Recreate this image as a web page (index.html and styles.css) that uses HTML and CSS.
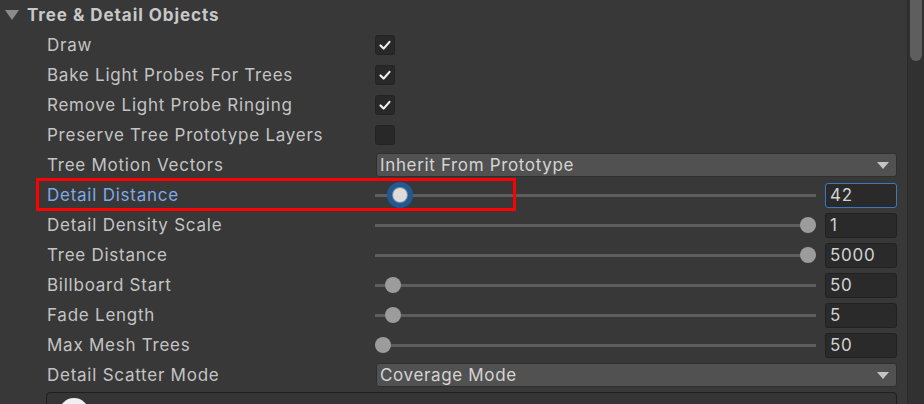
FILE: index.html
```html
<!DOCTYPE html>
<html>
<head>
<meta charset="utf-8">
<link rel="stylesheet" href="styles.css">
</head>
<body>
<div class="page">
  <div class="content">
    <div class="header">
      <span class="fold"></span>
      <span class="title">Tree &amp; Detail Objects</span>
    </div>

    <div class="row">
      <span class="label">Draw</span>
      <div class="ctrl"><span class="check"><svg viewBox="0 0 20 20" width="20" height="20"><polyline points="5,10.5 8.5,14 15,6.5" fill="none" stroke="#f0f0f0" stroke-width="2.4" stroke-linecap="round" stroke-linejoin="round"/></svg></span></div>
    </div>
    <div class="row">
      <span class="label">Bake Light Probes For Trees</span>
      <div class="ctrl"><span class="check"><svg viewBox="0 0 20 20" width="20" height="20"><polyline points="5,10.5 8.5,14 15,6.5" fill="none" stroke="#f0f0f0" stroke-width="2.4" stroke-linecap="round" stroke-linejoin="round"/></svg></span></div>
    </div>
    <div class="row">
      <span class="label">Remove Light Probe Ringing</span>
      <div class="ctrl"><span class="check"><svg viewBox="0 0 20 20" width="20" height="20"><polyline points="5,10.5 8.5,14 15,6.5" fill="none" stroke="#f0f0f0" stroke-width="2.4" stroke-linecap="round" stroke-linejoin="round"/></svg></span></div>
    </div>
    <div class="row">
      <span class="label">Preserve Tree Prototype Layers</span>
      <div class="ctrl"><span class="check"></span></div>
    </div>
    <div class="row">
      <span class="label">Tree Motion Vectors</span>
      <div class="ctrl"><div class="dropdown"><span>Inherit From Prototype</span><span class="arrow"></span></div></div>
    </div>
    <div class="row">
      <span class="label focus-label">Detail Distance</span>
      <div class="ctrl slider-ctrl">
        <div class="slider"><span class="track"></span><span class="thumb active" style="left:25px"></span></div>
        <span class="field focused">42</span>
      </div>
      <span class="annot"></span>
    </div>
    <div class="row">
      <span class="label">Detail Density Scale</span>
      <div class="ctrl slider-ctrl">
        <div class="slider"><span class="track"></span><span class="thumb" style="left:433px"></span></div>
        <span class="field">1</span>
      </div>
    </div>
    <div class="row">
      <span class="label">Tree Distance</span>
      <div class="ctrl slider-ctrl">
        <div class="slider"><span class="track"></span><span class="thumb" style="left:433px"></span></div>
        <span class="field">5000</span>
      </div>
    </div>
    <div class="row">
      <span class="label">Billboard Start</span>
      <div class="ctrl slider-ctrl">
        <div class="slider"><span class="track"></span><span class="thumb" style="left:18px"></span></div>
        <span class="field">50</span>
      </div>
    </div>
    <div class="row">
      <span class="label">Fade Length</span>
      <div class="ctrl slider-ctrl">
        <div class="slider"><span class="track"></span><span class="thumb" style="left:18px"></span></div>
        <span class="field">5</span>
      </div>
    </div>
    <div class="row">
      <span class="label">Max Mesh Trees</span>
      <div class="ctrl slider-ctrl">
        <div class="slider"><span class="track"></span><span class="thumb" style="left:8px"></span></div>
        <span class="field">50</span>
      </div>
    </div>
    <div class="row">
      <span class="label">Detail Scatter Mode</span>
      <div class="ctrl"><div class="dropdown"><span>Coverage Mode</span><span class="arrow"></span></div></div>
    </div>
    <div class="box">
      <span class="circle"></span>
    </div>
  </div>
  <div class="scrollbar"><span class="sthumb"></span></div>
</div>
</body>
</html>
```
FILE: styles.css
```css
html, body {
  margin: 0;
  padding: 0;
  background: #383838;
  overflow: hidden;
}
body {
  font-family: Inter, "Noto Sans", "DejaVu Sans", sans-serif;
  color: #c4c4c4;
  font-size: 17px;
  letter-spacing: 0.75px;
}
.page {
  display: flex;
  width: 924px;
  height: 404px;
}
.content {
  flex: 1;
  padding-right: 10px;
  overflow: hidden;
}
.header {
  height: 30px;
  display: flex;
  align-items: center;
  padding-left: 5px;
}
.fold {
  width: 0;
  height: 0;
  border-left: 7px solid transparent;
  border-right: 7px solid transparent;
  border-top: 10px solid #8b8b8b;
  margin-right: 8px;
  margin-top: -1px;
}
.title {
  font-weight: 700;
  color: #c8c8c8;
  letter-spacing: 0.95px;
}
.row {
  position: relative;
  height: 30px;
  display: grid;
  grid-template-columns: 328px 1fr;
  align-items: center;
  padding-left: 47px;
}
.label {
  white-space: nowrap;
}
.focus-label {
  color: #7eaae6;
}
.ctrl {
  display: flex;
  align-items: center;
}
.check {
  width: 20px;
  height: 20px;
  box-sizing: border-box;
  background: #282828;
  border: 1px solid #232323;
  border-radius: 3px;
  display: flex;
  align-items: center;
  justify-content: center;
}
.check svg {
  display: block;
}
.dropdown {
  flex: 1;
  margin-left: 1px;
  height: 24px;
  box-sizing: border-box;
  background: #515151;
  border: 1px solid #2f2f2f;
  border-radius: 3px;
  display: flex;
  align-items: center;
  justify-content: space-between;
  padding: 0 7px 0 3px;
  color: #d4d4d4;
  letter-spacing: 0.65px;
}
.arrow {
  width: 0;
  height: 0;
  border-left: 6px solid transparent;
  border-right: 6px solid transparent;
  border-top: 7px solid #c4c4c4;
}
.slider-ctrl {
  gap: 9px;
}
.slider {
  position: relative;
  flex: 1;
  height: 30px;
  display: flex;
  align-items: center;
}
.track {
  display: block;
  width: 100%;
  height: 3px;
  background: #5e5e5e;
}
.thumb {
  position: absolute;
  top: 50%;
  width: 16px;
  height: 16px;
  margin: -8px 0 0 -8px;
  border-radius: 50%;
  background: #9c9c9c;
}
.thumb.active {
  width: 14px;
  height: 14px;
  margin: -7px 0 0 -7px;
  background: #dcdcdc;
  box-shadow: 0 0 0 1px #8a8a8a, 0 0 0 6px #1f5a96;
}
.field {
  width: 72px;
  height: 25px;
  box-sizing: border-box;
  background: #2a2a2a;
  border: 1px solid #212121;
  border-radius: 3px;
  padding: 0 4px;
  line-height: 23px;
  color: #d2d2d2;
}
.field.focused {
  border-color: #3a79bb;
}
.annot {
  position: absolute;
  left: 36px;
  top: -2px;
  width: 480px;
  height: 33px;
  box-sizing: border-box;
  border: 3px solid #ff0000;
  pointer-events: none;
}
.box {
  margin: 2px 0 0 46px;
  height: 40px;
  border: 1px solid #1f1f1f;
  border-radius: 4px;
  background: #353535;
  padding: 5px 0 0 12px;
}
.circle {
  display: block;
  width: 30px;
  height: 30px;
  border-radius: 50%;
  background: #f0f0f0;
}
.scrollbar {
  background: #313131;
  border-left: 1px solid #2a2a2a;
  padding: 0 2px;
  box-sizing: border-box;
  width: 17px;
}
.sthumb {
  display: block;
  height: 61px;
  background: #5e5e5e;
  border-radius: 0 0 6px 6px;
}
```
